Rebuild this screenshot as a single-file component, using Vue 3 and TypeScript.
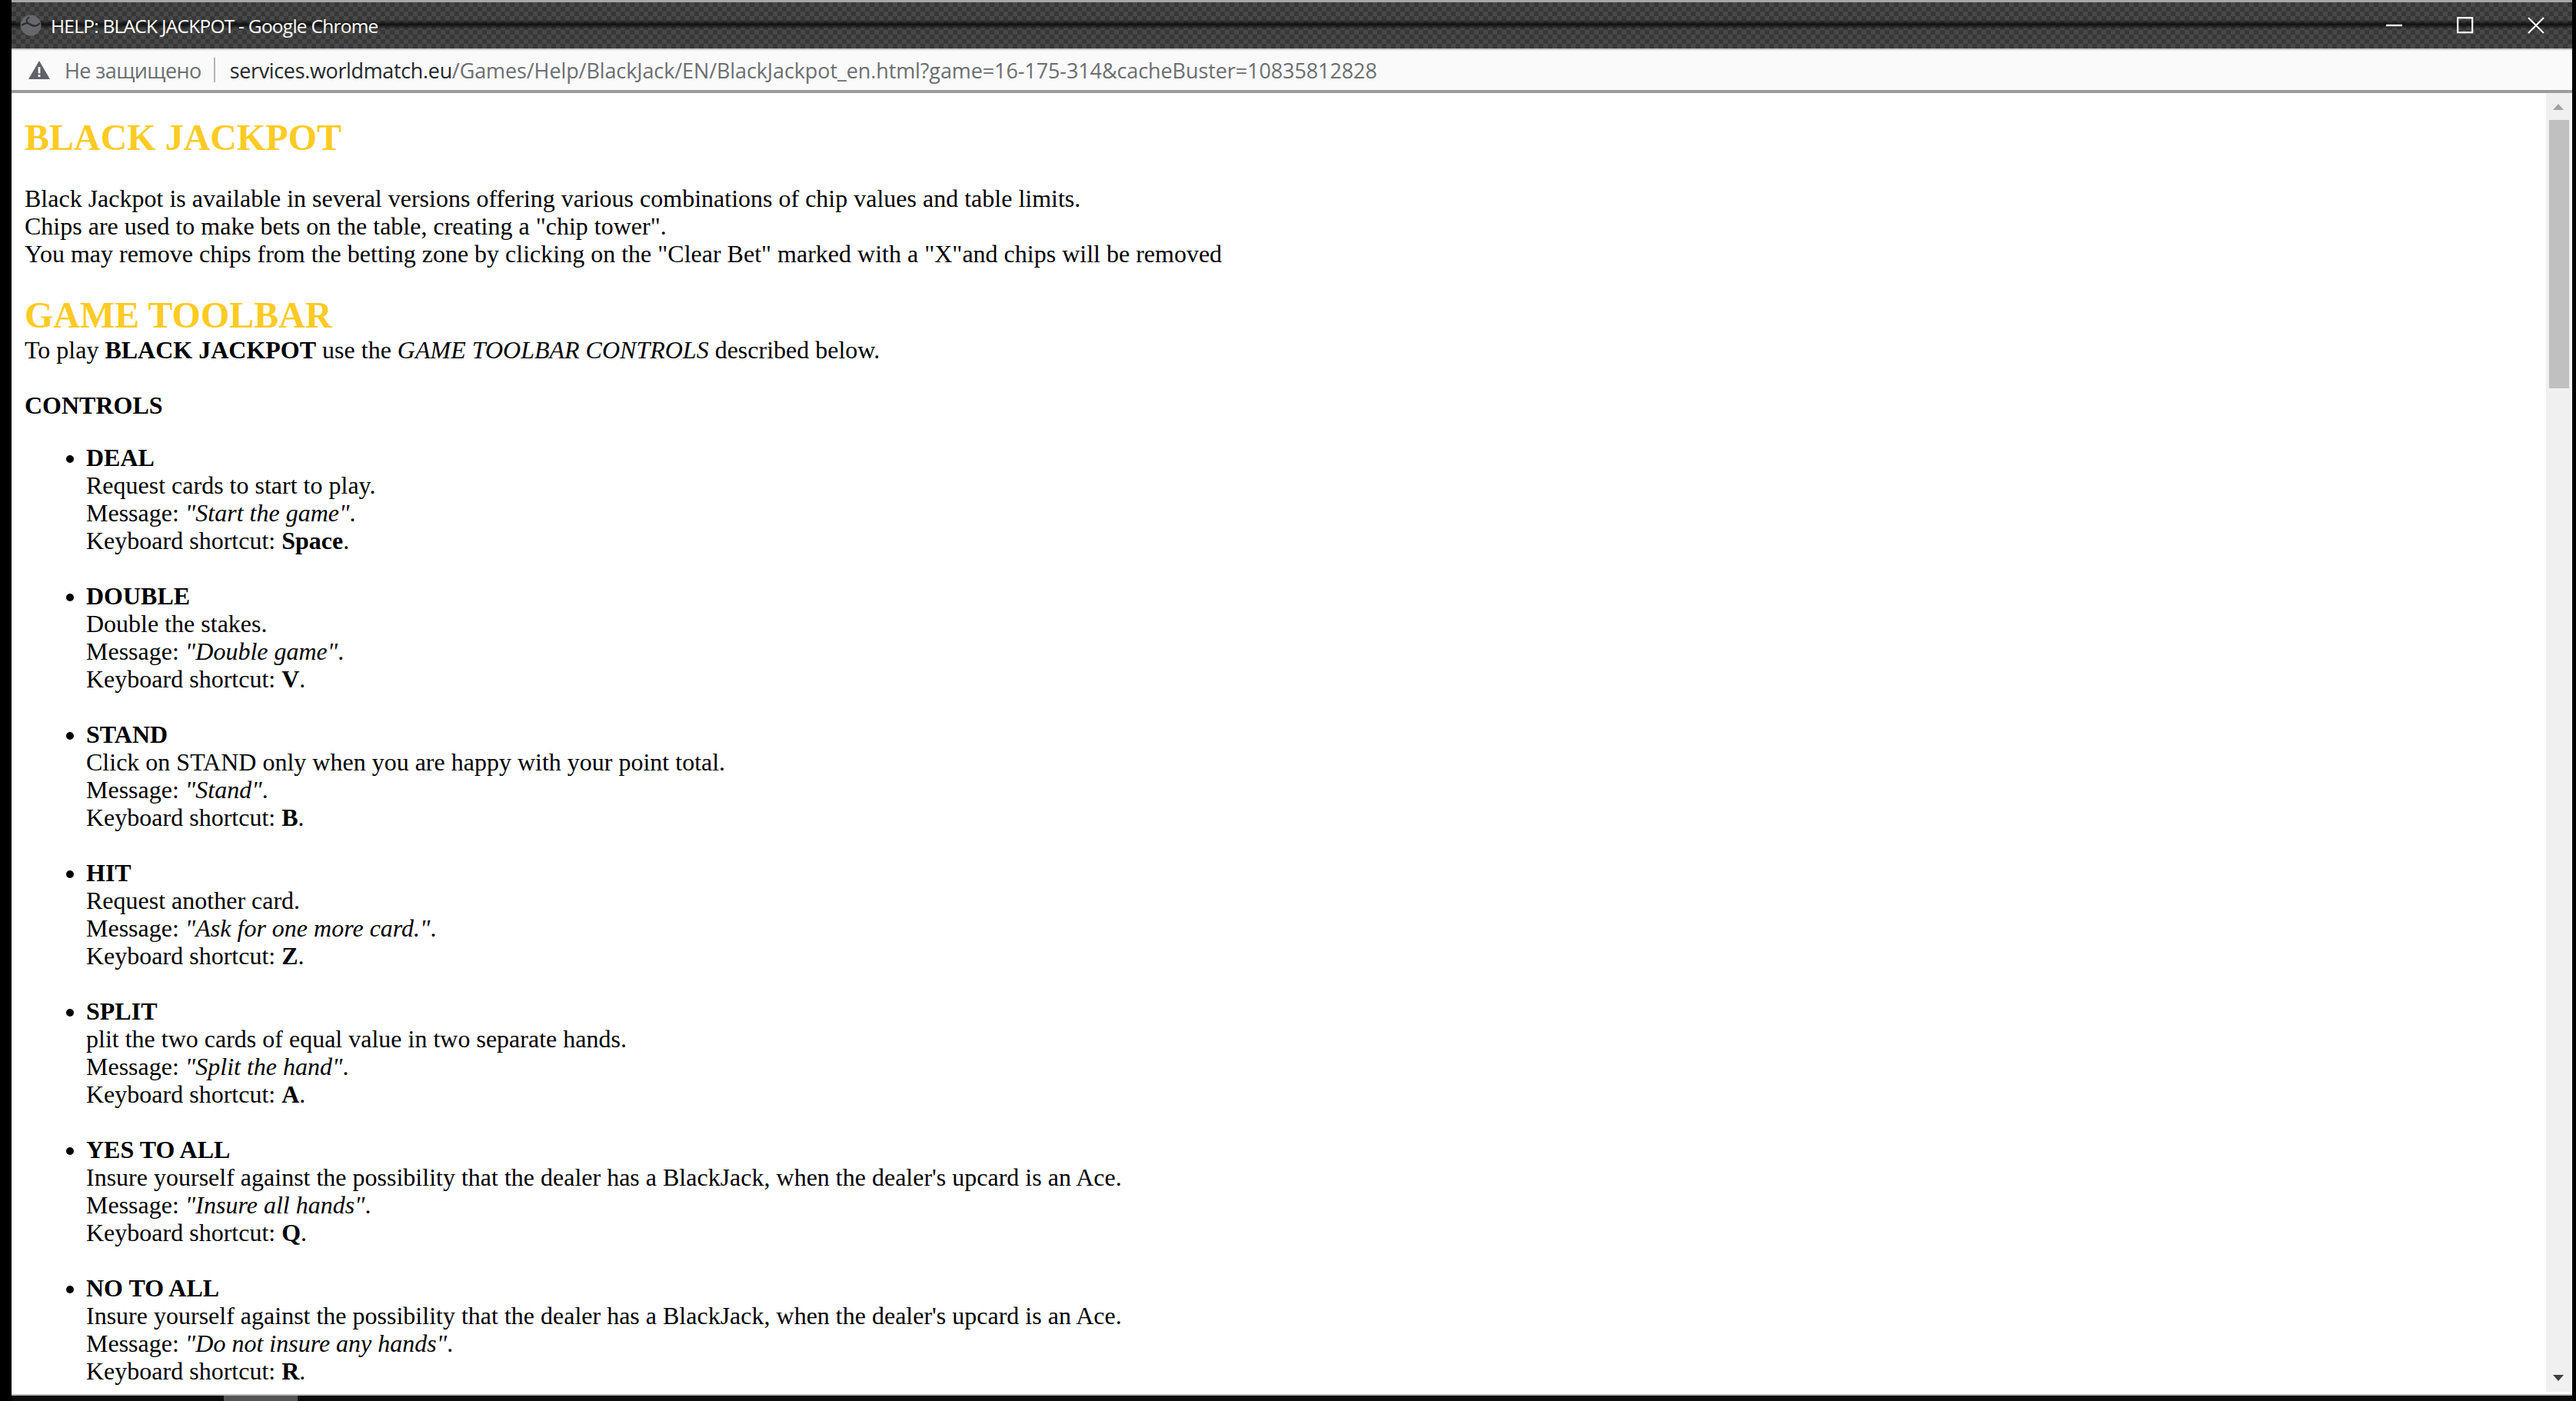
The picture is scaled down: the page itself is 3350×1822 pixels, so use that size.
<script setup lang="ts">
interface Control { name: string; desc: string; msg: string; key: string }
const controls: Control[] = [
  { name: 'DEAL', desc: 'Request cards to start to play.', msg: '"Start the game"', key: 'Space' },
  { name: 'DOUBLE', desc: 'Double the stakes.', msg: '"Double game"', key: 'V' },
  { name: 'STAND', desc: 'Click on STAND only when you are happy with your point total.', msg: '"Stand"', key: 'B' },
  { name: 'HIT', desc: 'Request another card.', msg: '"Ask for one more card."', key: 'Z' },
  { name: 'SPLIT', desc: 'plit the two cards of equal value in two separate hands.', msg: '"Split the hand"', key: 'A' },
  { name: 'YES TO ALL', desc: "Insure yourself against the possibility that the dealer has a BlackJack, when the dealer's upcard is an Ace.", msg: '"Insure all hands"', key: 'Q' },
  { name: 'NO TO ALL', desc: "Insure yourself against the possibility that the dealer has a BlackJack, when the dealer's upcard is an Ace.", msg: '"Do not insure any hands"', key: 'R' },
]
</script>

<template>
  <div class="screen">
    <div class="window">
      <header class="titlebar">
        <div class="title-left">
          <svg class="globe" viewBox="0 0 28 28" width="28" height="28">
            <circle cx="14" cy="14" r="13.5" fill="#66686c" />
            <path d="M2 14c4-3 7-4 10-2 3 2 6 4 10 2 2-1 3-2 4-3" fill="none" stroke="#2e2e30" stroke-width="2.2" />
            <path d="M12 3c-3 2-4 5-2 8" fill="none" stroke="#2e2e30" stroke-width="2" />
          </svg>
          <span class="title-text">HELP: BLACK JACKPOT - Google Chrome</span>
        </div>
        <div class="win-controls">
          <span class="win-btn"><svg viewBox="0 0 22 22" width="22" height="22"><path d="M0 11h21" stroke="#fff" stroke-width="2.4" /></svg></span>
          <span class="win-btn"><svg viewBox="0 0 22 22" width="22" height="22"><rect x="1.2" y="1.2" width="19" height="19" fill="none" stroke="#fff" stroke-width="2.2" /></svg></span>
          <span class="win-btn"><svg viewBox="0 0 22 22" width="22" height="22"><path d="M1 1l20 20M21 1L1 21" stroke="#fff" stroke-width="2" /></svg></span>
        </div>
      </header>
      <div class="addressbar">
        <svg class="warn" viewBox="0 0 30 26" width="30" height="26">
          <path d="M15 1L29 25H1z" fill="#5f6368" />
          <rect x="13.6" y="9" width="2.8" height="8.5" fill="#fafafa" />
          <rect x="13.6" y="19.2" width="2.8" height="2.8" fill="#fafafa" />
        </svg>
        <span class="insecure">Не защищено</span>
        <span class="divider"></span>
        <span class="url"><span class="host">services.worldmatch.eu</span>/Games/Help/BlackJack/EN/BlackJackpot_en.html?game=16-175-314&amp;cacheBuster=10835812828</span>
      </div>
      <div class="viewport">
        <main class="doc">
          <h2 class="first">BLACK JACKPOT</h2>
          <p class="intro">
            Black Jackpot is available in several versions offering various combinations of chip values and table limits.<br />
            Chips are used to make bets on the table, creating a "chip tower".<br />
            You may remove chips from the betting zone by clicking on the "Clear Bet" marked with a "X"and chips will be removed
          </p>
          <h2 class="second">GAME TOOLBAR</h2>
          <p class="lead">To play <b>BLACK JACKPOT</b> use the <i>GAME TOOLBAR CONTROLS</i> described below.</p>
          <p class="controls-head"><b>CONTROLS</b></p>
          <ul>
            <li v-for="c in controls" :key="c.name">
              <b>{{ c.name }}</b><br />
              {{ c.desc }}<br />
              Message: <i>{{ c.msg }}</i>.<br />
              Keyboard shortcut: <b>{{ c.key }}</b>.
            </li>
          </ul>
        </main>
        <aside class="scrollbar">
          <span class="arrow up"></span>
          <span class="thumb"></span>
          <span class="arrow down"></span>
        </aside>
      </div>
    </div>
    <div class="taskstrip"><span class="taskitem"></span></div>
  </div>
</template>

<style scoped>
.screen {
  width: 3350px;
  height: 1822px;
  background: #000;
  box-sizing: border-box;
  padding: 0 5px 0 15px;
  overflow: hidden;
  display: flex;
  flex-direction: column;
}
.window {
  flex: 1;
  min-height: 0;
  display: flex;
  flex-direction: column;
  background: #fff;
  border-top: 3px solid #a8a8a8;
  border-bottom: 2px solid #bbb;
}
.taskstrip {
  height: 7px;
  flex: none;
  background: #0c0c0c;
}
.taskitem {
  display: block;
  width: 96px;
  height: 7px;
  margin-left: 276px;
  background: #555;
}
.titlebar {
  height: 62px;
  flex: none;
  display: flex;
  align-items: center;
  justify-content: space-between;
  background-color: #3f3f3f;
  background-image:
    linear-gradient(180deg, rgba(0,0,0,0) 38%, rgba(0,0,0,.75) 48%, rgba(0,0,0,0) 58%),
    repeating-conic-gradient(#484848 0 25%, #383838 0 50%);
  background-size: 100% 100%, 12px 12px;
  border-bottom: 2px solid #c8c8c8;
  box-sizing: border-box;
  font-family: "Open Sans", "Noto Sans", sans-serif;
}
.title-left { display: flex; align-items: center; margin-left: 11px; }
.title-text { color: #fff; font-size: 24.5px; margin-left: 12px; letter-spacing: -0.75px; }
.win-controls { display: flex; margin-right: 36px; gap: 70px; }
.win-btn { display: flex; width: 22px; height: 22px; }
.addressbar {
  height: 56px;
  flex: none;
  display: flex;
  align-items: center;
  background: #fafafa;
  border-bottom: 4px solid #9c9c9c;
  box-sizing: border-box;
  font-family: "Open Sans", "Noto Sans", sans-serif;
  font-size: 27px;
  letter-spacing: -0.1px;
  color: #6b6e72;
}
.warn { margin-left: 21px; }
.insecure { margin-left: 18px; letter-spacing: -0.6px; }
.divider { width: 2px; height: 32px; background: #b5b5b5; margin: 0 19px 0 16px; }
.host { color: #24272b; letter-spacing: -0.35px; }
.viewport {
  flex: 1;
  min-height: 0;
  display: flex;
  overflow: hidden;
}
.doc {
  flex: 1;
  min-width: 0;
  overflow: hidden;
  padding: 0 17px;
  font-family: "Liberation Serif", "Times New Roman", serif;
  font-size: 32px;
  line-height: 36px;
  color: #000;
}
h2 {
  margin: 0;
  color: #fdcb22;
  font-size: 48px;
  line-height: 54px;
  font-weight: 700;
}
.first { margin-top: 31px; }
.intro { margin: 34px 0 0; }
.second { margin-top: 35px; }
.lead { margin: 0; }
.controls-head { margin: 36px 0 0; }
ul { margin: 32px 0 0; padding: 0 0 0 80px; }
li { margin-bottom: 36px; }
.scrollbar {
  width: 32px;
  flex: none;
  margin-right: 2px;
  margin-bottom: 3px;
  background: #f0f0f0;
  position: relative;
}
.thumb {
  position: absolute;
  left: 4px;
  right: 2px;
  top: 35px;
  height: 349px;
  background: #c0c0c0;
}
.arrow {
  position: absolute;
  left: 9px;
  width: 0;
  height: 0;
  border-left: 7px solid transparent;
  border-right: 7px solid transparent;
}
.up { top: 14px; border-bottom: 8px solid #a3a3a3; }
.down { bottom: 14px; border-top: 8px solid #3f3f3f; }
</style>
